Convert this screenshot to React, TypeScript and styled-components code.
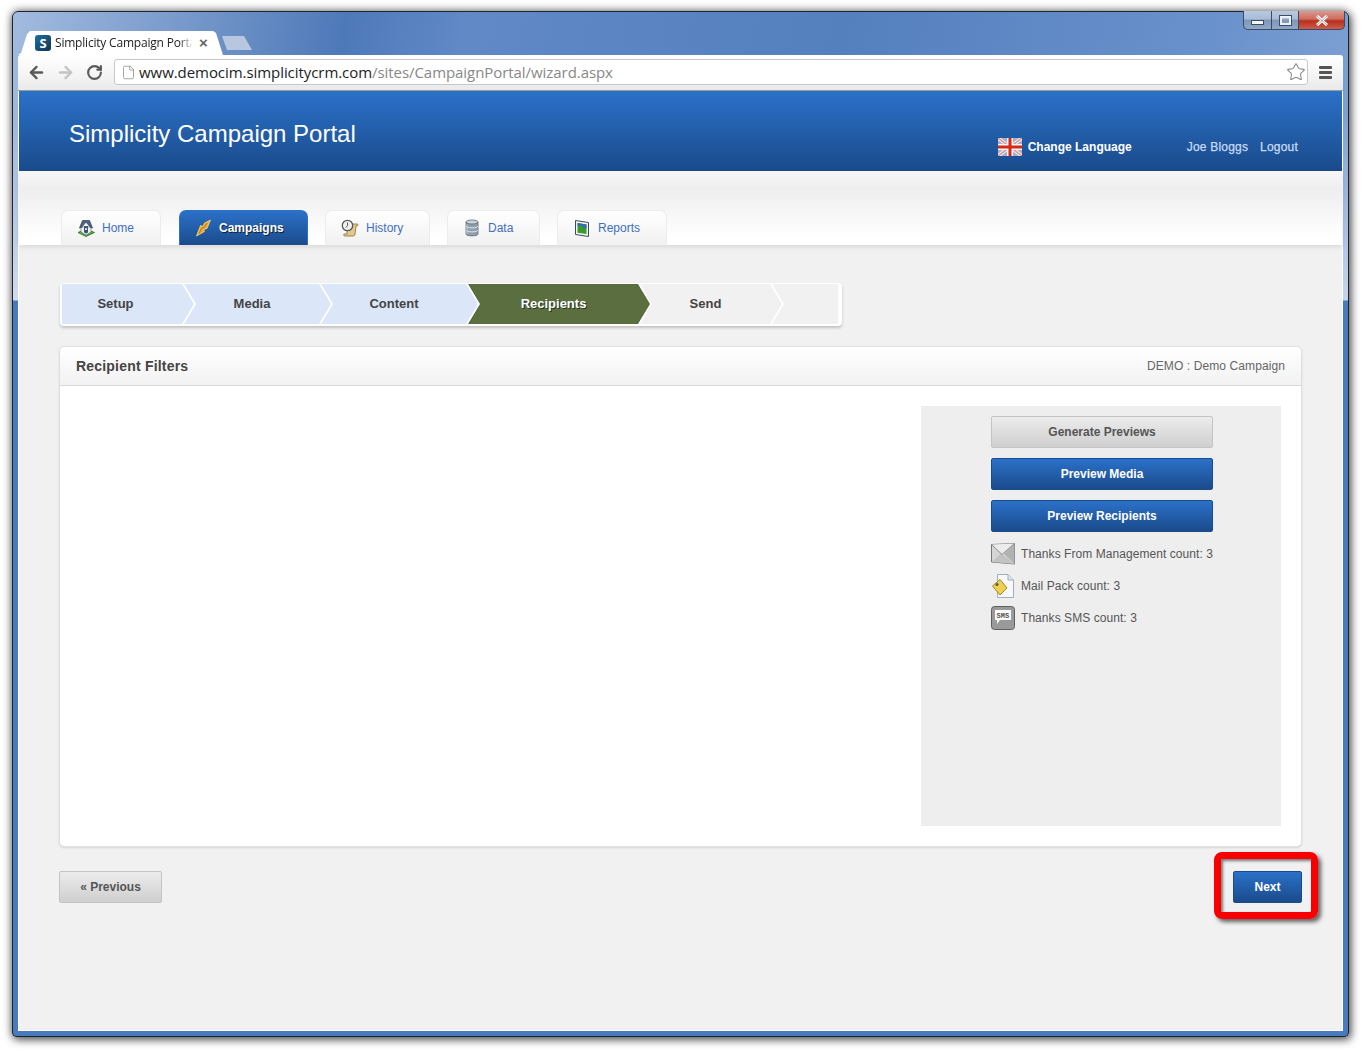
import styled, { createGlobalStyle } from "styled-components";
import { ArrowLeft, ArrowRight, RotateCw, Star, File } from "lucide-react";

const GlobalStyle = createGlobalStyle`
  html, body {
    margin: 0;
    padding: 0;
    background: #fff;
    font-family: "Liberation Sans", Arial, sans-serif;
  }
`;

const tabs = [
  { label: "Home", width: 100, gap: 18, icon: "home" },
  { label: "Campaigns", width: 129, gap: 17, icon: "bolt", active: true },
  { label: "History", width: 105, gap: 17, icon: "history" },
  { label: "Data", width: 93, gap: 17, icon: "data" },
  { label: "Reports", width: 110, gap: 0, icon: "reports" },
];

const steps = [
  { label: "Setup", width: 132, state: "done", first: true },
  { label: "Media", width: 147, state: "done" },
  { label: "Content", width: 157, state: "done" },
  { label: "Recipients", width: 182, state: "active" },
  { label: "Send", width: 142, state: "todo" },
  { label: "", width: 66, state: "todo", last: true },
];

const HomeIcon = () => (
  <svg width="18" height="18" viewBox="0 0 18 18">
    <path d="M1 13.500l8 4 8.500-4-8.500-3.500z" fill="#55a83a" stroke="#2f6d1e" strokeWidth=".8" />
    <path d="M4 8h10v5l-5 3-5-3z" fill="#eef1f6" stroke="#5d6d86" strokeWidth=".6" />
    <path d="M2.500 9L5.500 1.500h7L15.500 9l-2-.5L9 3 4.500 8.500z" fill="#4d6384" stroke="#2c3a52" strokeWidth=".7" />
    <path d="M7 7h4v6.500l-2 1-2-1z" fill="#3f5270" />
    <path d="M8 9h2v2H8z" fill="#c6d6ea" />
  </svg>
);

const BoltIcon = () => (
  <svg width="17" height="18" viewBox="0 0 17 18">
    <path d="M15.500 1L9.500 4 8 7.500 5.500 6.500 1.500 17 9.500 12.500 8.500 10.500 12 9.500z" fill="#f0b030" stroke="#fbe08a" strokeWidth=".7" />
    <path d="M12 4L9.500 8 7 9 4 14.500" fill="none" stroke="#c9780f" strokeWidth="1.200" />
  </svg>
);

const HistoryIcon = () => (
  <svg width="18" height="18" viewBox="0 0 18 18">
    <path d="M6 5h10.500c.5 0 .5 2-.5 2h-1l-1 8c0 1.500-1 2-2 2H4c-1.500 0-2-2-.5-2H6z" fill="#e3c98e" stroke="#8a6a30" strokeWidth=".8" />
    <circle cx="6.500" cy="6.500" r="5.200" fill="#eef0ee" stroke="#55585a" strokeWidth="1.300" />
    <path d="M6.500 3.500v3l-1.500 2" fill="none" stroke="#444" strokeWidth=".9" />
  </svg>
);

const DataIcon = () => (
  <svg width="18" height="18" viewBox="0 0 18 18">
    <path d="M3 3v12c0 2.500 12 2.500 12 0V3z" fill="#8f9fac" stroke="#5a6975" strokeWidth=".8" />
    <ellipse cx="9" cy="3" rx="6" ry="2" fill="#c9d3da" stroke="#5a6975" strokeWidth=".8" />
    <path d="M3 7c0 2.500 12 2.500 12 0M3 11c0 2.500 12 2.500 12 0" fill="none" stroke="#dfe5ea" strokeWidth="1" />
    <path d="M4 5.500v9.500" stroke="#c3ced6" strokeWidth="1" />
  </svg>
);

const ReportsIcon = () => (
  <svg width="18" height="18" viewBox="0 0 18 18">
    <path d="M2.500 1.500l13 2v14l-13-2z" fill="#f2f4f4" stroke="#3e4a54" strokeWidth="1" />
    <path d="M4.500 4l9 1.500v9.500l-9-1.200z" fill="#3a9a2a" />
    <path d="M4.500 4l9 1.500v4l-3-.5-2-3-2 1-2-.5z" fill="#3568c0" />
  </svg>
);

const tabIcons: Record<string, React.ReactNode> = {
  home: <HomeIcon />,
  bolt: <BoltIcon />,
  history: <HistoryIcon />,
  data: <DataIcon />,
  reports: <ReportsIcon />,
};

const FlagIcon = () => (
  <svg width="24" height="18" viewBox="0 0 24 18">
    <rect width="24" height="18" fill="#a3aed0" />
    <path d="M0 0l24 18M24 0L0 18" stroke="#f0e8e8" strokeWidth="3.500" />
    <path d="M0 0l24 18M24 0L0 18" stroke="#d88a80" strokeWidth="1.200" />
    <path d="M12 0v18M0 9h24" stroke="#f7f7f7" strokeWidth="6" />
    <path d="M12 0v18M0 9h24" stroke="#d42a16" strokeWidth="3" />
  </svg>
);

const EnvelopeIcon = () => (
  <svg width="24" height="22" viewBox="0 0 24 22">
    <path d="M.5 1.500L23.500 .5v20.500L.5 19z" fill="#d6d6d6" stroke="#777" />
    <path d="M.5 19L10 10.500 23.500 21z" fill="#c2c2c2" />
    <path d="M23.500 .5L13 11l10.500 10z" fill="#b2b2b2" />
    <path d="M.5 1.500L11 11.500 23.500 .5" fill="#ececec" stroke="#8a8a8a" />
  </svg>
);

const NoteIcon = () => (
  <svg width="24" height="24" viewBox="0 0 24 24">
    <path d="M6.500 .5H17l5.500 5.500v17.500h-16z" fill="#f6f8fb" stroke="#a6adb8" />
    <path d="M17 .5V6h5.500" fill="#dfe4ea" stroke="#a6adb8" />
    <path d="M1.500 12L9 5.500l7 8.500-7 7z" fill="#ecd04e" stroke="#a58a22" />
    <circle cx="6" cy="10.500" r="1.500" fill="#555" />
  </svg>
);

const SmsIcon = () => (
  <svg width="24" height="24" viewBox="0 0 24 24">
    <rect x=".5" y=".5" width="23" height="23" rx="3" fill="#9a9a9a" stroke="#5f5f5f" />
    <path d="M4 4h16v10H9l-3 4v-4H4z" fill="#fafafa" />
    <text x="12" y="11.500" fontSize="7" fontFamily="Liberation Mono, monospace" fontWeight="700" textAnchor="middle" fill="#555">SMS</text>
  </svg>
);

const counts = [
  { label: "Thanks From Management count: 3", icon: <EnvelopeIcon /> },
  { label: "Mail Pack count: 3", icon: <NoteIcon /> },
  { label: "Thanks SMS count: 3", icon: <SmsIcon /> },
];

const App = () => {
  return (
    <Desktop>
      <GlobalStyle />
      <Window>
        <CaptionRow>
          <CaptionButton $width={28}>
            <MinimizeGlyph />
          </CaptionButton>
          <CaptionButton $width={27}>
            <MaximizeGlyph />
          </CaptionButton>
          <CloseButton>
            <svg width="14" height="11" viewBox="0 0 14 11">
              <path d="M2 1l10 9M12 1L2 10" stroke="#fff" strokeWidth="3" />
              <path d="M2 1l10 9M12 1L2 10" stroke="#555" strokeWidth=".5" />
            </svg>
          </CloseButton>
        </CaptionRow>
        <TabStrip>
          <BrowserTab>
            <Favicon>S</Favicon>
            <TabTitle>Simplicity Campaign Portal</TabTitle>
            <TabClose>×</TabClose>
          </BrowserTab>
          <NewTab />
        </TabStrip>
        <Toolbar>
          <NavIcons>
            <ArrowLeft size={19} strokeWidth={3} color="#5a5a5a" />
            <ArrowRight size={19} strokeWidth={3} color="#c4c4c4" />
            <ReloadIcon size={17} strokeWidth={3} color="#5a5a5a" />
          </NavIcons>
          <AddressBar>
            <File size={15} strokeWidth={1.2} color="#8a8a8a" />
            <Url>
              www.democim.simplicitycrm.com<UrlPath>/sites/CampaignPortal/wizard.aspx</UrlPath>
            </Url>
            <StarSlot>
              <Star size={20} strokeWidth={1.3} color="#8a8a8a" />
            </StarSlot>
          </AddressBar>
          <MenuIcon>
            <span />
            <span />
            <span />
          </MenuIcon>
        </Toolbar>
        <Page>
          <Header>
            <PortalTitle>Simplicity Campaign Portal</PortalTitle>
            <HeaderLinks>
              <FlagIcon />
              <LanguageLink>Change Language</LanguageLink>
              <UserLink>Joe Bloggs</UserLink>
              <LogoutLink>Logout</LogoutLink>
            </HeaderLinks>
          </Header>
          <NavBand>
            {tabs.map((tab) => (
              <NavTab key={tab.label} $width={tab.width} $gap={tab.gap} $active={tab.active}>
                {tabIcons[tab.icon]}
                <span>{tab.label}</span>
              </NavTab>
            ))}
          </NavBand>
          <Main>
            <StepBar>
              {steps.map((step, i) => (
                <Step key={i} $width={step.width} $state={step.state} $first={step.first} $last={step.last}>
                  {step.label}
                </Step>
              ))}
            </StepBar>
            <Panel>
              <PanelHeader>
                <PanelTitle>Recipient Filters</PanelTitle>
                <CampaignName>DEMO : Demo Campaign</CampaignName>
              </PanelHeader>
              <PanelBody>
                <Sidebar>
                  <GreyButton>Generate Previews</GreyButton>
                  <BlueButton>Preview Media</BlueButton>
                  <BlueButton>Preview Recipients</BlueButton>
                  <CountList>
                    {counts.map((c) => (
                      <CountRow key={c.label}>
                        <CountIcon>{c.icon}</CountIcon>
                        {c.label}
                      </CountRow>
                    ))}
                  </CountList>
                </Sidebar>
              </PanelBody>
            </Panel>
            <FooterRow>
              <PrevButton>« Previous</PrevButton>
              <NextWrap>
                <NextButton>Next</NextButton>
                <Highlight />
              </NextWrap>
            </FooterRow>
          </Main>
        </Page>
      </Window>
    </Desktop>
  );
};

const Desktop = styled.div`
  width: 1365px;
  height: 1053px;
  padding: 11px 16px 16px 12px;
  box-sizing: border-box;
  overflow: hidden;
  background: #fff;
`;

const Window = styled.div`
  width: 100%;
  height: 100%;
  box-sizing: border-box;
  display: flex;
  flex-direction: column;
  padding: 0 5px 5px;
  border: 1px solid #1c2430;
  border-radius: 6px 6px 4px 4px;
  background:
    linear-gradient(
      180deg,
      rgba(255, 255, 255, 0) 0,
      rgba(255, 255, 255, 0) 100px,
      rgba(255, 255, 255, 0.55) 288px,
      #4a7abe 289px
    ),
    linear-gradient(100deg, #a3bbdf 0, #4e79b8 22%, #6089c6 30%, #5480be 55%, #6a92cc 80%, #93b0da 100%);
  box-shadow: 0 0 10px rgba(0, 0, 0, 0.55), 2px 3px 8px rgba(0, 0, 0, 0.45);
`;

const CaptionRow = styled.div`
  display: flex;
  justify-content: flex-end;
  height: 18px;
  margin: -1px -2px 0 0;
  padding-top: 1px;
  flex: none;
`;

const CaptionButton = styled.div<{ $width: number }>`
  width: ${(p) => p.$width}px;
  height: 19px;
  margin-top: -1px;
  box-sizing: border-box;
  display: flex;
  align-items: center;
  justify-content: center;
  border: 1px solid #3b4a60;
  border-top: none;
  border-right: none;
  background: linear-gradient(180deg, #b9c9df 0, #a8bcd8 45%, #7d97ba 50%, #8fa8c9 100%);
  &:first-child {
    border-radius: 0 0 0 5px;
  }
`;

const CloseButton = styled.div`
  width: 47px;
  height: 19px;
  margin-top: -1px;
  box-sizing: border-box;
  display: flex;
  align-items: center;
  justify-content: center;
  border: 1px solid #3b4a60;
  border-top: none;
  border-radius: 0 0 5px 0;
  background: linear-gradient(180deg, #d99a90 0, #cf6a5c 45%, #b8301f 55%, #cc5c4a 100%);
`;

const MinimizeGlyph = styled.div`
  width: 11px;
  height: 3px;
  margin-top: 4px;
  background: #f4f6fa;
  border: 1px solid #3d4c63;
`;

const MaximizeGlyph = styled.div`
  width: 7px;
  height: 5px;
  border: 2px solid #eef2f7;
  outline: 1px solid #3d4c63;
`;

const TabStrip = styled.div`
  display: flex;
  align-items: flex-end;
  height: 25px;
  flex: none;
`;

const BrowserTab = styled.div`
  width: 205px;
  height: 24px;
  box-sizing: border-box;
  display: flex;
  align-items: center;
  padding: 0 0 0 17px;
  background: #fff;
  clip-path: polygon(0 100%, 3px 92%, 9px 14%, 12px 0, 195px 0, 198px 8%, 205px 100%);
`;

const Favicon = styled.div`
  width: 16px;
  height: 16px;
  flex: none;
  border-radius: 3px;
  background: linear-gradient(135deg, #1d6fa8, #12334f);
  color: #fff;
  font: 700 13px/16px "Open Sans", sans-serif;
  text-align: center;
`;

const TabTitle = styled.div`
  width: 138px;
  margin-left: 4px;
  overflow: hidden;
  white-space: nowrap;
  font: 12px/16px "Open Sans", sans-serif;
  letter-spacing: -0.2px;
  color: #222;
  -webkit-mask-image: linear-gradient(90deg, #000 124px, transparent 138px);
  mask-image: linear-gradient(90deg, #000 124px, transparent 138px);
`;

const TabClose = styled.div`
  margin-left: 6px;
  font: 700 15px/16px "Liberation Sans", sans-serif;
  color: #666;
`;

const NewTab = styled.div`
  width: 30px;
  height: 14px;
  margin: 0 0 5px -1px;
  background: #b6c7df;
  clip-path: polygon(0 0, 22px 0, 30px 100%, 5px 100%);
`;

const Toolbar = styled.div`
  height: 36px;
  box-sizing: border-box;
  flex: none;
  display: flex;
  align-items: center;
  padding: 0 11px 1px 9px;
  border-bottom: 1px solid #9a9a9a;
  border-radius: 3px 3px 0 0;
  background: linear-gradient(180deg, #fff 0, #f4f4f4 60%, #e9e9e9 100%);
`;

const NavIcons = styled.div`
  width: 87px;
  flex: none;
  display: flex;
  align-items: center;
  gap: 10px;
`;

const ReloadIcon = styled(RotateCw)`
  margin-left: 1px;
`;

const AddressBar = styled.div`
  width: 1194px;
  height: 26px;
  box-sizing: border-box;
  flex: none;
  display: flex;
  align-items: center;
  padding: 0 1px 0 6px;
  border: 1px solid #c8c8c8;
  border-radius: 3px;
  background: #fff;
`;

const Url = styled.div`
  margin-left: 3px;
  font: 15px/20px "Open Sans", sans-serif;
  letter-spacing: -0.06px;
  color: #222;
  white-space: nowrap;
`;

const UrlPath = styled.span`
  color: #888;
`;

const StarSlot = styled.div`
  display: flex;
  margin-left: auto;
`;

const MenuIcon = styled.div`
  margin-left: 11px;
  display: flex;
  flex-direction: column;
  gap: 2px;
  & span {
    width: 13px;
    height: 3px;
    background: #555;
    border-radius: 1px;
  }
`;

const Page = styled.div`
  flex: 1;
  display: flex;
  flex-direction: column;
  min-height: 0;
  background: #f1f1f1;
  border: 1px solid #fff;
  border-top: none;
`;

const Header = styled.div`
  height: 80px;
  flex: none;
  box-sizing: border-box;
  display: flex;
  justify-content: space-between;
  padding: 29px 44px 0 50px;
  background: linear-gradient(180deg, #2b71c9 0, #1a4b8b 100%);
`;

const PortalTitle = styled.div`
  font-size: 24px;
  line-height: 28px;
  color: #fff;
`;

const HeaderLinks = styled.div`
  display: flex;
  align-items: center;
  height: 18px;
  margin-top: 18px;
  font-size: 12px;
  font-weight: 700;
`;

const LanguageLink = styled.span`
  margin-left: 6px;
  color: #fff;
`;

const UserLink = styled.span`
  margin-left: 55px;
  font-weight: 400;
  letter-spacing: 0.2px;
  -webkit-text-stroke: 0.25px #c8dcf5;
  color: #c8dcf5;
`;

const LogoutLink = styled.span`
  margin-left: 12px;
  font-weight: 400;
  letter-spacing: 0.2px;
  -webkit-text-stroke: 0.25px #c8dcf5;
  color: #c8dcf5;
`;

const NavBand = styled.div`
  height: 74px;
  flex: none;
  box-sizing: border-box;
  display: flex;
  align-items: flex-end;
  padding-left: 42px;
  background: linear-gradient(180deg, #f7f7f7 0, #eeeeee 25%, #ffffff 90%);
  box-shadow: 0 2px 5px rgba(0, 0, 0, 0.1);
  position: relative;
`;

const NavTab = styled.div<{ $width: number; $gap: number; $active?: boolean }>`
  width: ${(p) => p.$width}px;
  height: 35px;
  flex: none;
  box-sizing: border-box;
  margin-right: ${(p) => p.$gap}px;
  display: flex;
  align-items: center;
  gap: 7px;
  padding-left: 15px;
  border: 1px solid ${(p) => (p.$active ? "#2b71c9" : "#ececec")};
  border-bottom: none;
  border-radius: 7px 7px 0 0;
  font-size: 12px;
  font-weight: ${(p) => (p.$active ? 700 : 400)};
  color: ${(p) => (p.$active ? "#fff" : "#3f6fc4")};
  background: ${(p) =>
    p.$active
      ? "linear-gradient(180deg, #2b71c9 0, #1a4b8b 100%)"
      : "linear-gradient(180deg, #fff 0, #f1f1f1 100%)"};
  text-shadow: ${(p) => (p.$active ? "1px 1px 0 #123" : "none")};
`;

const Main = styled.div`
  flex: 1;
  display: flex;
  flex-direction: column;
  padding: 38px 40px 0;
`;

const StepBar = styled.div`
  width: 782px;
  height: 43px;
  box-sizing: border-box;
  display: flex;
  margin-left: 1px;
  padding: 1px 2px 2px;
  border-radius: 4px;
  background: #fff;
  box-shadow: 0 2px 3px rgba(0, 0, 0, 0.2);
`;

const stepColours: Record<string, string> = {
  done: "#dbe7f8",
  active: "#5a6e40",
  todo: "#f1f1f1",
};

const Step = styled.div<{ $width: number; $state: string; $first?: boolean; $last?: boolean }>`
  width: ${(p) => p.$width}px;
  flex: none;
  box-sizing: border-box;
  margin-left: ${(p) => (p.$first ? 0 : -10)}px;
  padding-right: ${(p) => (p.$first ? 25 : 11)}px;
  text-align: center;
  font-size: 13px;
  font-weight: 700;
  line-height: 39px;
  color: ${(p) => (p.$state === "active" ? "#fff" : "#444")};
  text-shadow: ${(p) => (p.$state === "active" ? "1px 1px 0 #2c3520" : "none")};
  background: ${(p) => stepColours[p.$state]};
  clip-path: ${(p) =>
    p.$first
      ? "polygon(0 0, calc(100% - 12px) 0, 100% 50%, calc(100% - 12px) 100%, 0 100%)"
      : p.$last
        ? "polygon(0 0, 100% 0, 100% 100%, 0 100%, 12px 50%)"
        : "polygon(0 0, calc(100% - 12px) 0, 100% 50%, calc(100% - 12px) 100%, 0 100%, 12px 50%)"};
`;

const Panel = styled.div`
  height: 501px;
  box-sizing: border-box;
  flex: none;
  display: flex;
  flex-direction: column;
  margin-top: 20px;
  border: 1px solid #e0e0e0;
  border-radius: 5px;
  background: #fff;
  box-shadow: 0 1px 2px rgba(0, 0, 0, 0.12);
`;

const PanelHeader = styled.div`
  height: 39px;
  flex: none;
  box-sizing: border-box;
  display: flex;
  align-items: center;
  justify-content: space-between;
  padding: 0 16px;
  border-bottom: 1px solid #d8d8d8;
  border-radius: 5px 5px 0 0;
  background: linear-gradient(180deg, #fff 0, #f2f2f2 100%);
`;

const PanelTitle = styled.div`
  font-size: 14px;
  font-weight: 700;
  letter-spacing: 0.2px;
  color: #444;
`;

const CampaignName = styled.div`
  font-size: 12px;
  letter-spacing: 0.1px;
  color: #666;
`;

const PanelBody = styled.div`
  flex: 1;
  display: flex;
  justify-content: flex-end;
  padding: 20px 20px 20px 0;
`;

const Sidebar = styled.div`
  width: 360px;
  box-sizing: border-box;
  padding: 10px 68px 0 70px;
  background: #eeeeee;
  display: flex;
  flex-direction: column;
  gap: 10px;
`;

const BaseButton = styled.div`
  height: 32px;
  box-sizing: border-box;
  display: flex;
  align-items: center;
  justify-content: center;
  border-radius: 2px;
  font-size: 12px;
  font-weight: 700;
`;

const GreyButton = styled(BaseButton)`
  border: 1px solid #c4c4c4;
  background: linear-gradient(180deg, #ececec 0, #cfcfcf 100%);
  color: #555;
`;

const BlueButton = styled(BaseButton)`
  border: 1px solid #1a4b8b;
  background: linear-gradient(180deg, #2b71c9 0, #1a4b8b 100%);
  color: #fff;
`;

const CountList = styled.div`
  display: flex;
  flex-direction: column;
  gap: 8px;
`;

const CountRow = styled.div`
  height: 24px;
  display: flex;
  align-items: center;
  gap: 6px;
  font-size: 12px;
  letter-spacing: 0.06px;
  color: #555;
  white-space: nowrap;
`;

const CountIcon = styled.div`
  width: 24px;
  height: 24px;
  flex: none;
  display: flex;
  align-items: center;
`;

const FooterRow = styled.div`
  display: flex;
  justify-content: space-between;
  margin-top: 24px;
`;

const PrevButton = styled(GreyButton)`
  width: 103px;
`;

const NextWrap = styled.div`
  position: relative;
`;

const NextButton = styled(BlueButton)`
  width: 69px;
`;

const Highlight = styled.div`
  position: absolute;
  top: -19px;
  left: -19px;
  right: -16px;
  bottom: -16px;
  box-sizing: border-box;
  border: 7px solid #f80000;
  border-radius: 8px;
  box-shadow: 3px 3px 4px rgba(0, 0, 0, 0.6), inset 2px 2px 3px rgba(0, 0, 0, 0.5);
`;

export default App;
